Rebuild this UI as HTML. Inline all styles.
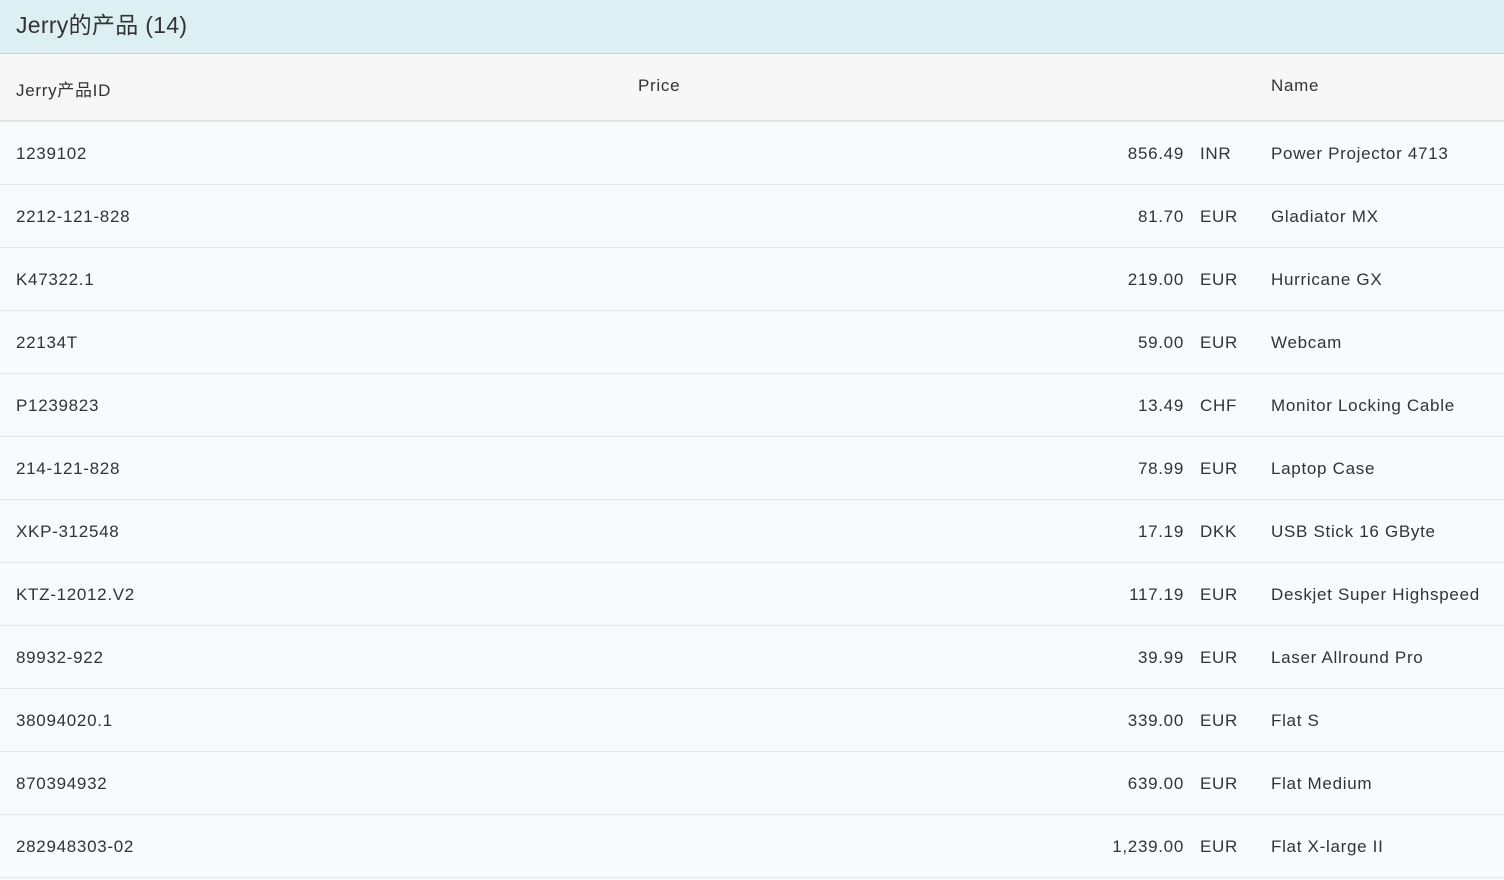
<!DOCTYPE html><html><head><meta charset="utf-8"><style>
body{margin:0;width:1504px;height:880px;overflow:hidden;background:#f7fafb;font-family:"Liberation Sans","Noto Sans CJK SC",sans-serif;color:#333;letter-spacing:0.7px}
.t{height:53px;background:#dcf0f3;border-bottom:1px solid #c8cdcf;font-size:23px;line-height:50px;padding-left:16px;color:#333;letter-spacing:0.3px}
.h{height:66px;background:#f7f7f7;border-bottom:2px solid #e2e2e2;position:relative;font-size:17px;color:#333}
.h span{position:absolute;top:22px}
.r{height:62px;border-bottom:1px solid #e1e4e6;position:relative;font-size:17px;background:#f7fbfc}
.r span{position:absolute;top:22px}
.id{left:16px}.p{right:320px;text-align:right}.c{left:1200px}.n{left:1271px}
</style></head><body>
<div class="t">Jerry的产品 (14)</div>
<div class="h"><span style="left:16px;top:22px">Jerry产品ID</span><span style="left:638px">Price</span><span style="left:1271px">Name</span></div>
<div class="r"><span class="id">1239102</span><span class="p">856.49</span><span class="c">INR</span><span class="n">Power Projector 4713</span></div>
<div class="r"><span class="id">2212-121-828</span><span class="p">81.70</span><span class="c">EUR</span><span class="n">Gladiator MX</span></div>
<div class="r"><span class="id">K47322.1</span><span class="p">219.00</span><span class="c">EUR</span><span class="n">Hurricane GX</span></div>
<div class="r"><span class="id">22134T</span><span class="p">59.00</span><span class="c">EUR</span><span class="n">Webcam</span></div>
<div class="r"><span class="id">P1239823</span><span class="p">13.49</span><span class="c">CHF</span><span class="n">Monitor Locking Cable</span></div>
<div class="r"><span class="id">214-121-828</span><span class="p">78.99</span><span class="c">EUR</span><span class="n">Laptop Case</span></div>
<div class="r"><span class="id">XKP-312548</span><span class="p">17.19</span><span class="c">DKK</span><span class="n">USB Stick 16 GByte</span></div>
<div class="r"><span class="id">KTZ-12012.V2</span><span class="p">117.19</span><span class="c">EUR</span><span class="n">Deskjet Super Highspeed</span></div>
<div class="r"><span class="id">89932-922</span><span class="p">39.99</span><span class="c">EUR</span><span class="n">Laser Allround Pro</span></div>
<div class="r"><span class="id">38094020.1</span><span class="p">339.00</span><span class="c">EUR</span><span class="n">Flat S</span></div>
<div class="r"><span class="id">870394932</span><span class="p">639.00</span><span class="c">EUR</span><span class="n">Flat Medium</span></div>
<div class="r"><span class="id">282948303-02</span><span class="p">1,239.00</span><span class="c">EUR</span><span class="n">Flat X-large II</span></div>
</body></html>
